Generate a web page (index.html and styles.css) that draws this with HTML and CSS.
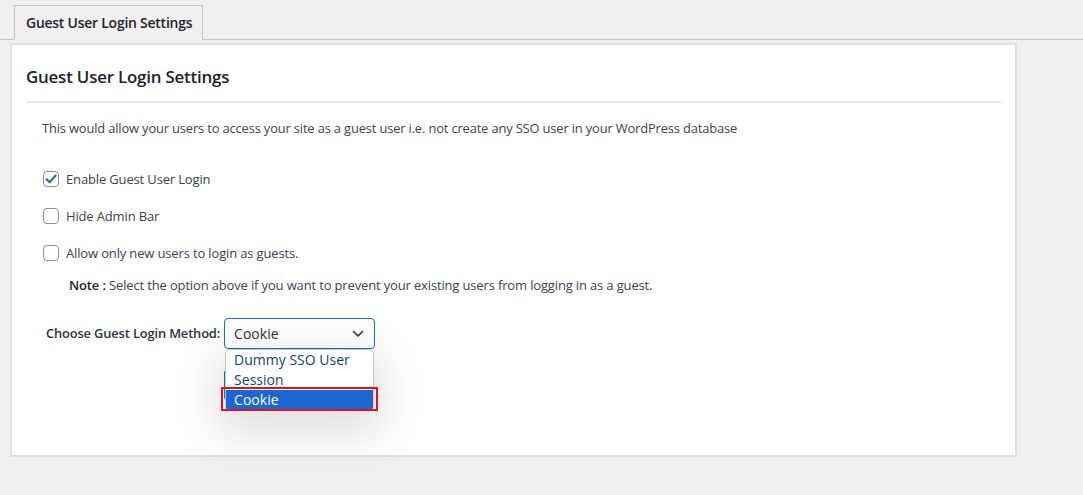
FILE: index.html
```html
<!DOCTYPE html>
<html>
<head>
<meta charset="utf-8">
<link rel="stylesheet" href="styles.css">
</head>
<body>
<div class="tabs">
  <div class="tab">Guest User Login Settings</div>
</div>
<div class="panel">
  <h2 class="title">Guest User Login Settings</h2>
  <div class="rule"></div>
  <p class="desc">This would allow your users to access your site as a guest user i.e. not create any SSO user in your WordPress database</p>
  <div class="opts">
    <label class="opt"><span class="cb checked"><svg viewBox="0 0 16 16" width="16" height="16"><path d="M3.6 8.2 L6.6 11.2 L12.6 4.6" fill="none" stroke="#2271b1" stroke-width="2.2" stroke-linecap="round" stroke-linejoin="round"/></svg></span>Enable Guest User Login</label>
    <label class="opt"><span class="cb"></span>Hide Admin Bar</label>
    <label class="opt"><span class="cb"></span>Allow only new users to login as guests.</label>
  </div>
  <p class="note"><b>Note :</b> Select the option above if you want to prevent your existing users from logging in as a guest.</p>
  <div class="method">
    <span class="mlabel">Choose Guest Login Method:</span>
    <div class="selwrap">
      <div class="select"><span>Cookie</span><svg class="chev" viewBox="0 0 12 8" width="12" height="8"><path d="M1.5 1.5 L6 6 L10.5 1.5" fill="none" stroke="#2c3338" stroke-width="1.6" stroke-linecap="round" stroke-linejoin="round"/></svg></div>
      <div class="savebtn"></div>
      <div class="dropdown">
        <div class="item">Dummy SSO User Session</div>
        <div class="item sel">Cookie</div>
      </div>
      <div class="highlight"></div>
    </div>
  </div>
</div>
</body>
</html>
```
FILE: styles.css
```css
* { box-sizing: border-box; }
html, body { margin: 0; padding: 0; }
body {
  background: #f0f0f1;
  font-family: "Open Sans", "Noto Sans", sans-serif;
  color: #3c434a;
  width: 1083px;
  height: 495px;
  overflow: hidden;
}
.tabs {
  padding: 5px 0 0 14px;
  border-bottom: 1px solid #c3c4c7;
  height: 40px;
}
.tab {
  width: 189px;
  height: 35px;
  border: 1px solid #c3c4c7;
  border-bottom: none;
  background: #f0f0f1;
  font-size: 13.9px;
  font-weight: 600;
  color: #1d2327;
  line-height: 33px;
  padding-left: 11px;
  letter-spacing: -0.2px;
}
.panel {
  margin: 3px 0 0 10px;
  width: 1007px;
  height: 414px;
  background: #fff;
  border: 2px solid #e0e0e0;
  padding: 0 14px;
}
.title {
  margin: 0;
  padding-top: 20px;
  font-size: 16.9px;
  font-weight: 600;
  color: #1d2327;
  line-height: 24px;
  letter-spacing: -0.2px;
}
.rule {
  margin-top: 12px;
  height: 2px;
  background: #e6e6e6;
}
.desc {
  margin: 16px 0 0 16px;
  font-size: 12.9px;
  line-height: 18px;
  letter-spacing: -0.15px;
}
.opts {
  margin-top: 33px;
  margin-left: 17px;
  display: flex;
  flex-direction: column;
  gap: 19px;
}
.opt {
  display: flex;
  align-items: center;
  gap: 7px;
  font-size: 13px;
  line-height: 18px;
  letter-spacing: -0.15px;
}
.cb {
  width: 16px;
  height: 16px;
  border: 1px solid #8c8f94;
  border-radius: 4px;
  background: #fff;
  display: inline-block;
}
.cb svg { display: block; margin: -1px 0 0 -1px; }
.note {
  margin: 14px 0 0 43px;
  font-size: 13px;
  line-height: 18px;
  letter-spacing: -0.15px;
}
.note b { font-weight: 600; color: #1d2327; }
.method {
  margin-top: 24px;
  margin-left: 20px;
  display: flex;
  align-items: flex-start;
  gap: 4px;
}
.mlabel {
  font-size: 12.9px;
  font-weight: 600;
  color: #2c3338;
  letter-spacing: -0.15px;
  line-height: 30px;
}
.selwrap {
  position: relative;
  width: 151px;
}
.select {
  width: 151px;
  height: 31px;
  border: 1.5px solid #2271b1;
  border-radius: 4px;
  display: flex;
  align-items: center;
  justify-content: space-between;
  padding: 0 10px 0 9px;
  font-size: 14px;
  color: #2c3338;
}
.chev { display: block; }
.savebtn {
  margin-top: 21px;
  width: 80px;
  height: 30px;
  background: #2271b1;
  border-radius: 3px;
}
.dropdown {
  position: absolute;
  left: 1px;
  top: 31px;
  width: 149px;
  background: #fff;
  border: 1px solid #c8c8c8;
  border-radius: 4px;
  box-shadow: 0 14px 45px 10px rgba(0,0,0,0.12);
  overflow: hidden;
  font-size: 14px;
  color: #1d3f5e;
}
.item {
  padding: 0 8px;
  line-height: 20px;
}
.item.sel {
  background: #1a66d2;
  color: #fff;
}
.highlight {
  position: absolute;
  left: -3px;
  top: 69px;
  width: 157px;
  height: 24px;
  border: 2px solid #e0141e;
}
```
